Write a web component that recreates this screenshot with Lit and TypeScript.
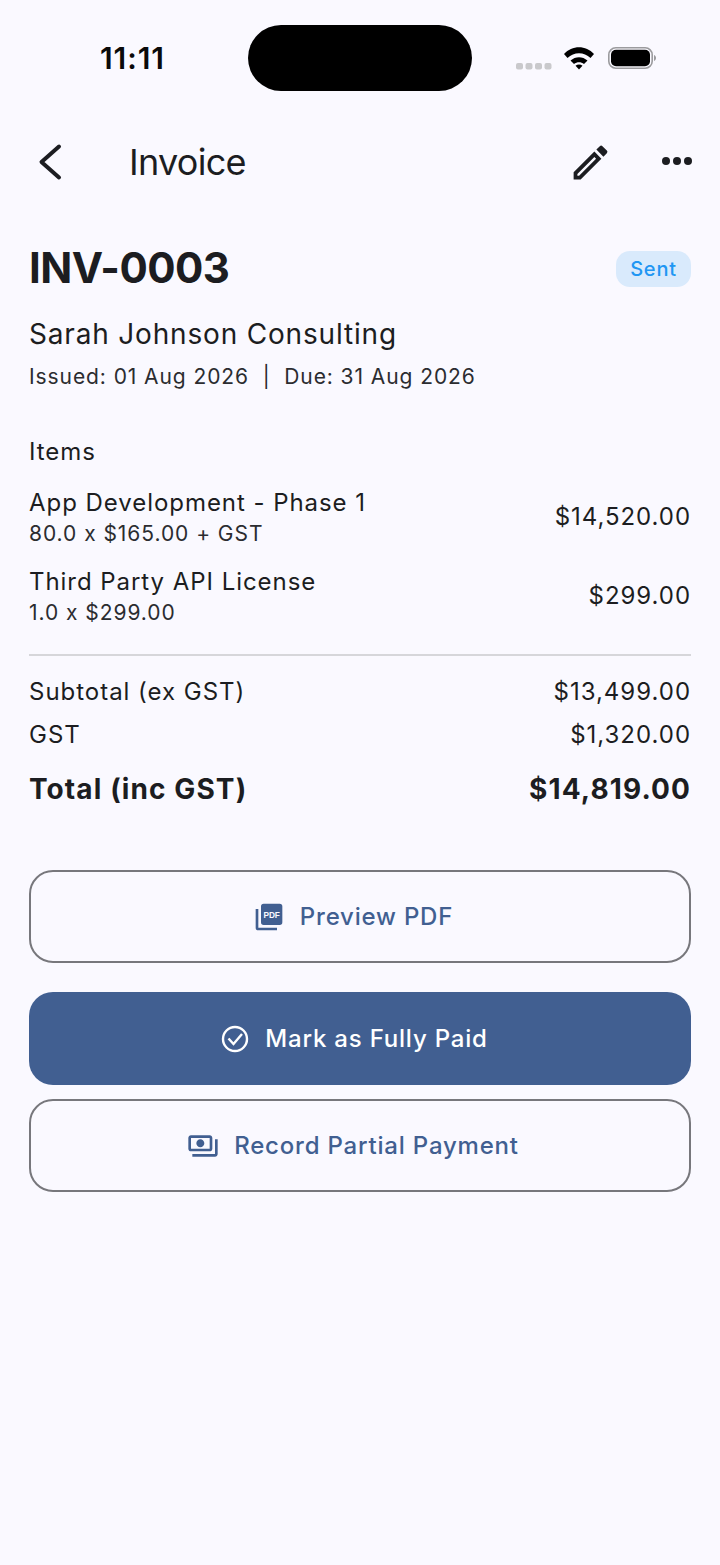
import { LitElement, html, css, svg } from "lit";
import { customElement } from "lit/decorators.js";

@customElement("app-root")
export class AppRoot extends LitElement {
  static styles = css`
    :host { display: block; width: 720px; height: 1565px; background: #faf9ff; font-family: Inter, "Noto Sans", sans-serif; color: #1c1d21; overflow: hidden; }
    .status { position: relative; height: 110px; display: flex; align-items: center; justify-content: space-between; padding: 6px 60px 0 100px; box-sizing: border-box; }
    .time { font-size: 30px; font-weight: 600; color: #0a0a0a; letter-spacing: 0.9px; line-height: 36px; }
    .island { position: absolute; left: 248px; top: 25px; width: 224px; height: 66px; background: #000; border-radius: 33px; }
    .appbar { height: 104px; display: flex; align-items: center; padding: 0 28px 0 29px; }
    .title { font-size: 36px; font-weight: 400; margin-left: 56px; flex: 1; line-height: 44px; letter-spacing: -0.7px; }
    .pencil { margin-right: 49px; }
    .content { padding: 26px 29px 0; display: flex; flex-direction: column; }
    .head { display: flex; justify-content: space-between; align-items: center; height: 56px; }
    h1 { margin: 0; font-size: 42px; font-weight: 700; line-height: 56px; letter-spacing: -0.5px; }
    .badge { background: #d9eafc; color: #2196f3; font-size: 20px; font-weight: 500; letter-spacing: 0.8px; height: 36px; width: 75px; margin-top: 2px; border-radius: 14px; display: flex; align-items: center; justify-content: center; }
    .client { font-size: 28px; line-height: 36px; margin-top: 20px; letter-spacing: 0.82px; }
    .dates { font-size: 21px; line-height: 28px; margin-top: 11px; letter-spacing: 0.92px; color: #2b2c30; }
    .items-label { font-size: 24px; line-height: 32px; margin-top: 45px; letter-spacing: 0.95px; }
    .item { display: flex; justify-content: space-between; align-items: center; }
    .i1 { margin-top: 18px; } .i2 { margin-top: 17px; }
    .name { font-size: 24px; line-height: 33px; letter-spacing: 0.95px; }
    .sub { font-size: 21px; line-height: 28px; margin-top: 1px; letter-spacing: 0.95px; color: #2b2c30; }
    .amt { font-size: 24px; letter-spacing: 0.95px; padding-bottom: 2px; }
    .rule { height: 2px; background: #d6d6da; margin: 27px 0 20px; }
    .row { display: flex; justify-content: space-between; font-size: 24px; line-height: 32px; letter-spacing: 0.98px; }
    .row + .row { margin-top: 11px; }
    .row + .total { font-weight: 700; font-size: 28px; line-height: 36px; letter-spacing: 1.1px; margin-top: 20px; }
    .btn { box-sizing: border-box; height: 93px; border-radius: 24px; padding-right: 14px; display: flex; align-items: center; justify-content: center; gap: 15px; font-size: 24px; font-weight: 500; letter-spacing: 0.8px; }
    .outline { border: 2px solid #77777c; color: #415f91; }
    .fill { background: #415f91; color: #fff; padding-right: 12px; }
    .b1 { margin-top: 63px; } .b2 { margin-top: 29px; } .b3 { margin-top: 14px; }
    svg { display: block; flex: none; }
    .pdf { font-family: "Liberation Sans", sans-serif; font-size: 7px; font-weight: 700; letter-spacing: 0; fill: #faf9ff; }
  `;

  render() {
    return html`
      <div class="status">
        <span class="time">11:11</span>
        <div class="island"></div>
        <svg width="144" height="30" viewBox="0 0 144 30">
          ${[0, 1, 2, 3].map((i) => svg`<rect x="${i * 9.5}" y="20" width="7" height="6.500" rx="2" fill="#c9c9cc"/>`)}
          <path d="M48 11C56 2 70 2 78 11L74.500 15C68 8.500 58 8.500 51.500 15Z" fill="#000"/>
          <path d="M54.500 17.500C59.500 13 66.500 13 71.500 17.500L68 21C65 18.500 61 18.500 58 21Z" fill="#000"/>
          <path d="M59.500 22.800C61.500 21 64.500 21 66.500 22.800L63 26.500Z" fill="#000"/>
          <rect x="92.800" y="4.800" width="43.400" height="20.400" rx="7" fill="none" stroke="#9b9b9e" stroke-width="1.600"/>
          <rect x="95" y="6.800" width="39" height="16.400" rx="5" fill="#000"/>
          <path d="M138 12v6c1.400-.6 2-1.700 2-3s-.6-2.400-2-3z" fill="#9b9b9e"/>
        </svg>
      </div>
      <div class="appbar">
        <svg width="44" height="44" viewBox="0 0 44 44"><path d="M30 6.500L12.500 22L30 37.500" fill="none" stroke="#1c1d21" stroke-width="4" stroke-linecap="round" stroke-linejoin="round"/></svg>
        <span class="title">Invoice</span>
        <svg class="pencil" width="45" height="45" viewBox="0 0 24 24"><path d="M3 17.250V21h3.750L17.810 9.940l-3.750-3.750L3 17.250zM5.920 19H5v-.92l9.060-9.060.92.92L5.920 19zM20.710 7.040a1 1 0 0 0 0-1.410l-2.340-2.340a1 1 0 0 0-1.410 0l-1.830 1.830 3.750 3.750 1.830-1.830z" fill="#1c1d21"/></svg>
        <svg width="30" height="10" viewBox="0 0 30 10"><circle cx="4" cy="4" r="4" fill="#1c1d21"/><circle cx="15" cy="4" r="4" fill="#1c1d21"/><circle cx="26" cy="4" r="4" fill="#1c1d21"/></svg>
      </div>
      <div class="content">
        <div class="head"><h1>INV-0003</h1><span class="badge">Sent</span></div>
        <div class="client">Sarah Johnson Consulting</div>
        <div class="dates">Issued: 01 Aug 2026 &nbsp;|&nbsp; Due: 31 Aug 2026</div>
        <div class="items-label">Items</div>
        <div class="item i1"><div><div class="name">App Development - Phase 1</div><div class="sub">80.0 x $165.00 + GST</div></div><div class="amt">$14,520.00</div></div>
        <div class="item i2"><div><div class="name">Third Party API License</div><div class="sub">1.0 x $299.00</div></div><div class="amt">$299.00</div></div>
        <div class="rule"></div>
        <div class="row"><span>Subtotal (ex GST)</span><span>$13,499.00</span></div>
        <div class="row"><span>GST</span><span>$1,320.00</span></div>
        <div class="row total"><span>Total (inc GST)</span><span>$14,819.00</span></div>
        <div class="btn outline b1">
          <svg width="32" height="32" viewBox="0 0 24 24"><path d="M20 2H8a2 2 0 0 0-2 2v12a2 2 0 0 0 2 2h12a2 2 0 0 0 2-2V4a2 2 0 0 0-2-2zM4 6H2v14a2 2 0 0 0 2 2h14v-2H4V6z" fill="#415f91"/><text class="pdf" x="7.800" y="12.600" textLength="12.400" lengthAdjust="spacingAndGlyphs">PDF</text></svg>
          <span>Preview PDF</span>
        </div>
        <div class="btn fill b2">
          <svg width="30" height="30" viewBox="0 0 30 30"><circle cx="15" cy="15" r="12" fill="none" stroke="#fff" stroke-width="2.400"/><path d="M8.500 14.500l5 5.500L22 10" fill="none" stroke="#fff" stroke-width="2.400"/></svg>
          <span>Mark as Fully Paid</span>
        </div>
        <div class="btn outline b3">
          <svg width="32" height="32" viewBox="0 0 24 24"><path d="M19 14V6c0-1.100-.9-2-2-2H3c-1.100 0-2 .9-2 2v8c0 1.100.9 2 2 2h14c1.100 0 2-.9 2-2zm-2 0H3V6h14v8zm-7-7c-1.660 0-3 1.340-3 3s1.340 3 3 3 3-1.340 3-3-1.340-3-3-3zm13 0v11c0 1.100-.9 2-2 2H4v-2h17V7h2z" fill="#415f91"/></svg>
          <span>Record Partial Payment</span>
        </div>
      </div>
    `;
  }
}
